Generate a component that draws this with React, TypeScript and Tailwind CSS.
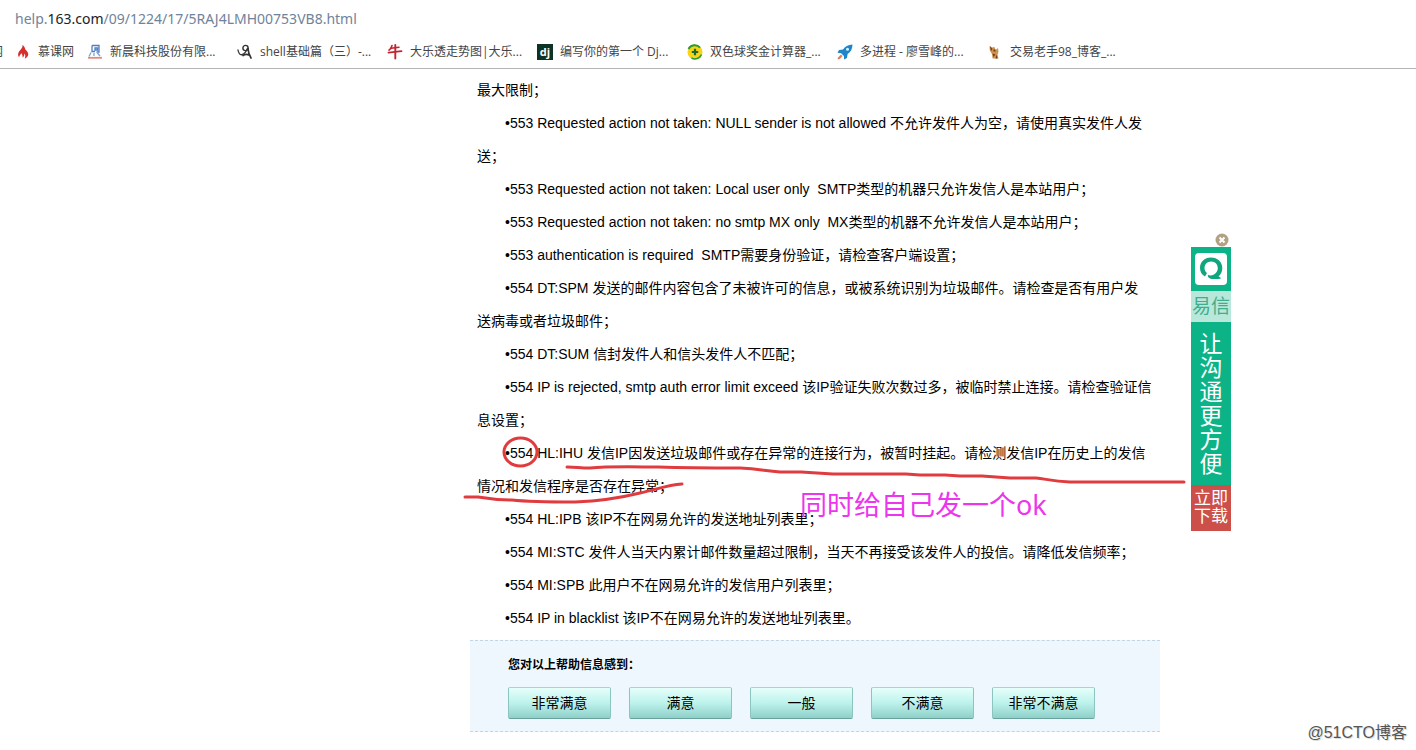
import * as React from 'react';

const bookmarks = [
  { label: '新晨科技股份有限...', icon: CompanyIcon },
  { label: 'shell基础篇（三）-...', icon: ShellIcon },
  { label: '大乐透走势图|大乐...', icon: OxIcon },
  { label: '编写你的第一个 Dj...', icon: DjangoIcon },
  { label: '双色球奖金计算器_...', icon: LotteryIcon },
  { label: '多进程 - 廖雪峰的...', icon: RocketIcon },
  { label: '交易老手98_博客_...', icon: TraderIcon },
];

const errorCodes = [
  '•553 Requested action not taken: NULL sender is not allowed 不允许发件人为空，请使用真实发件人发送；',
  '•553 Requested action not taken: Local user only\u00a0 SMTP类型的机器只允许发信人是本站用户；',
  '•553 Requested action not taken: no smtp MX only\u00a0 MX类型的机器不允许发信人是本站用户；',
  '•553 authentication is required\u00a0 SMTP需要身份验证，请检查客户端设置；',
  '•554 DT:SPM 发送的邮件内容包含了未被许可的信息，或被系统识别为垃圾邮件。请检查是否有用户发送病毒或者垃圾邮件；',
  '•554 DT:SUM 信封发件人和信头发件人不匹配；',
  '•554 IP is rejected, smtp auth error limit exceed 该IP验证失败次数过多，被临时禁止连接。请检查验证信息设置；',
  '•554 HL:IHU 发信IP因发送垃圾邮件或存在异常的连接行为，被暂时挂起。请检测发信IP在历史上的发信情况和发信程序是否存在异常；',
  '•554 HL:IPB 该IP不在网易允许的发送地址列表里；',
  '•554 MI:STC 发件人当天内累计邮件数量超过限制，当天不再接受该发件人的投信。请降低发信频率；',
  '•554 MI:SPB 此用户不在网易允许的发信用户列表里；',
  '•554 IP in blacklist 该IP不在网易允许的发送地址列表里。',
];

const ratings = ['非常满意', '满意', '一般', '不满意', '非常不满意'];

function FlameIcon() {
  return (
    <svg className="size-4 shrink-0" viewBox="0 0 16 16">
      <path d="M7.500 0.800C8 4 5.500 5.500 3.800 8c-1.200 2.200-.8 4 .4 5.200.2-2 1.300-2.800 2.600-4 .3 1.800 1 2.200.8 4.600C9 12.500 9.500 11 9.400 9.600c1 1 1.200 2.600.4 5C12.600 13.200 14 11 12.800 8.400 12 6.800 10.800 6.400 10.200 5 9.800 3.400 9 2 7.500.8z" fill="#d92c2c" />
    </svg>
  );
}

function CompanyIcon() {
  return (
    <svg className="size-4 shrink-0" viewBox="0 0 16 16" fill="none">
      <path d="M5 1.500h7v6.500H9.500M5 1.500v6h3M8 4h2.500v2H8z" stroke="#4c7fc0" strokeWidth="1.300" />
      <path d="M4 8.500 2 12.500M10 8.500l3 3.500M7 9v3" stroke="#7ba3d4" strokeWidth="1.300" />
      <path d="M1 13.800h14" stroke="#e08a7a" strokeWidth="1.800" />
    </svg>
  );
}

function ShellIcon() {
  return (
    <svg className="size-4 shrink-0" viewBox="0 0 16 16" fill="none" stroke="#333" strokeLinecap="round">
      <path d="M1 6c.6 3.500 2.200 5.200 4 4.600C7 10 9.500 7 10.400 4.600" strokeWidth="1.300" />
      <circle cx="8.500" cy="4" r="2.600" strokeWidth="1.400" />
      <path d="M11 4.500c.2 3 .8 6 3 9.500M6 11.500c2-1.600 4-1.600 6.500-.2" strokeWidth="1.700" />
    </svg>
  );
}

function OxIcon() {
  return (
    <svg className="size-4 shrink-0" viewBox="0 0 16 16" fill="none" stroke="#c4242f" strokeLinecap="round">
      <path d="M5 1.500C4.600 3.500 3.500 5 2 6.200" strokeWidth="1.600" />
      <path d="M4 4.300 12 3.200" strokeWidth="1.600" />
      <path d="M1.500 8.600 14.500 7.200" strokeWidth="1.800" />
      <path d="M8.300 1v13.500" strokeWidth="1.900" />
    </svg>
  );
}

function DjangoIcon() {
  return (
    <span className="flex size-4 shrink-0 items-center justify-center bg-[#0c3326] text-[11px] leading-4 font-bold text-white">
      dj
    </span>
  );
}

function LotteryIcon() {
  return (
    <svg className="size-4 shrink-0" viewBox="0 0 16 16" fill="none">
      <circle cx="8" cy="8" r="7.500" fill="#f7d417" />
      <path d="M1.500 5A7 7 0 0 1 13 3.600" stroke="#2a9a35" strokeWidth="1.900" />
      <path d="M14.500 10.500A7 7 0 0 1 4.500 14" stroke="#2a9a35" strokeWidth="1.500" />
      <path d="M8 4.800v6.400M4.800 8h6.400" stroke="#176b27" strokeWidth="2.200" />
    </svg>
  );
}

function RocketIcon() {
  return (
    <svg className="size-4 shrink-0" viewBox="0 0 16 16">
      <path d="M15.500.5C11 .6 8 2.500 6 5.500L2 6 .5 8.800l3.600.4 2.800 2.800.2 3.500L10 14l.6-4C13.800 8 15.400 5 15.500.5z" fill="#1e86c8" />
      <circle cx="10.500" cy="5.300" r="1.500" fill="#d9eefa" />
      <path d="M4 10.500 1 13.600 .6 15.600 2.800 15 5.600 12z" fill="#ec7a52" />
    </svg>
  );
}

function TraderIcon() {
  return (
    <svg className="size-4 shrink-0" viewBox="0 0 16 16">
      <path d="M2.500 2 5 3.500 7.500 3l1 3L11 4l.5 4-1 2.500 1 4H5.500L5 10 2.800 6.500z" fill="#cf9350" />
      <path d="M3 2 5.500 5 4 7zM6.500 5.500h2v2h-2zM5.500 9.500l3 1-2 2.500zM9.500 10.500l1 4h-2z" fill="#6e3d1c" />
    </svg>
  );
}

function Bookmark({ label, icon: Icon }: { label: string; icon: React.ComponentType }) {
  return (
    <a href="#" className="flex w-[150px] shrink-0 items-center gap-[7px]">
      <Icon />
      {label}
    </a>
  );
}

function BrowserBar() {
  return (
    <header className="h-[69px] overflow-hidden border-b border-[#b4b4b4] bg-white">
      <div className="flex h-[38px] items-center pl-[15px] font-['Noto_Sans','Noto_Sans_CJK_SC',sans-serif] text-sm text-[#71839a]">
        <span>
          help.<span className="text-[#222]">163.com</span>/09/1224/17/5RAJ4LMH00753VB8.html
        </span>
      </div>
      <nav className="flex h-[27px] items-center font-['Open_Sans','Noto_Sans_CJK_SC',sans-serif] text-xs whitespace-nowrap text-[#444]">
        <a href="#" className="flex w-[15px] shrink-0 justify-end overflow-hidden pr-3">网</a>
        <a href="#" className="flex w-[72px] shrink-0 items-center gap-[7px]">
          <FlameIcon />
          慕课网
        </a>
        {bookmarks.map(item => (
          <Bookmark key={item.label} label={item.label} icon={item.icon} />
        ))}
      </nav>
    </header>
  );
}

function Feedback() {
  return (
    <section className="border-y border-dashed border-[#c3d5e2] bg-[#eef7fe] pt-3 pr-2 pb-3 pl-[38px]">
      <h2 className="text-xs leading-6 font-bold">您对以上帮助信息感到：</h2>
      <div className="mt-[10px] flex gap-[18px]">
        {ratings.map(rating => (
          <button
            key={rating}
            type="button"
            className="h-8 w-[103px] rounded-[2px] border border-t-[#a5d5d0] border-r-[#8cc4bf] border-b-[#6aa39e] border-l-[#8cc4bf] bg-linear-to-b from-[#e6fffb] via-[#bdf2ec] to-[#8fd0c9] text-sm"
          >
            {rating}
          </button>
        ))}
      </div>
    </section>
  );
}

function Annotations() {
  return (
    <>
      <svg
        className="pointer-events-none absolute top-0 left-0 h-[662px] w-[960px]"
        viewBox="228 69 960 662"
        fill="none"
        stroke="#e03c3f"
        strokeWidth="3"
        strokeLinecap="round"
        strokeLinejoin="round"
      >
        <ellipse cx="520.500" cy="452" rx="16.500" ry="14" />
        <path d="M567 467 C576 467 580 468 590 468 C610 466 640 467 658 467 C690 468 715 468 740 468 C760 469 765 471 780 472 L801 472 L833 474 L906 474 L920 475 L945 475 L960 476 L982 476 L1010 478 L1036 478 C1046 479 1052 481 1070 482 L1184 482" />
        <path d="M465 497 L478 497 C490 499 500 500 512 500 C530 502 550 502 575 502 C600 501 620 498 640 493 C655 490 667 485 682 484" />
      </svg>
      <p className="pointer-events-none absolute top-[416px] left-[572px] text-[27px] leading-10 whitespace-nowrap text-[#ec35ec] font-['Noto_Sans','Noto_Sans_CJK_SC',sans-serif]">
        同时给自己发一个ok
      </p>
    </>
  );
}

function YixinAd() {
  return (
    <aside className="absolute top-[164px] left-full ml-[3px] w-10 text-center">
      <button type="button" aria-label="关闭" className="ml-6 block size-[14px]">
        <svg viewBox="0 0 14 14">
          <circle cx="7" cy="7" r="6.500" fill="#b3a184" />
          <path d="M4.500 4.500l5 5M9.500 4.500l-5 5" stroke="#fff" strokeWidth="2" />
        </svg>
      </button>
      <a href="#" className="block bg-[#0cb387]">
        <span className="flex h-11 items-center justify-center">
          <svg className="size-8" viewBox="0 0 32 32" fill="none">
            <rect width="32" height="32" rx="4" fill="#fff" />
            <path d="M16 4.500C9.500 4.500 5 9 5 15c0 4 2 7 5 8.500l2-3.500C10.300 18.800 9.500 17 9.500 15c0-3.700 2.900-6.500 6.700-6.500s6.600 2.800 6.600 6.500c0 4-3 7.200-7.200 7.400-1 .1-2-.2-2.600-.6-.6 2.200 1 4 4 4.200 2.500.1 5.500.1 8.500-.2.7-1-.3-2-2-2.400C26 21.400 27.300 18.500 27.300 15 27.300 9 22.500 4.500 16 4.500z" fill="#0fa57d" />
          </svg>
        </span>
        <span className="block h-[31px] bg-[#b9e8da] text-[19px] leading-[31px] text-[#3fae8d]">易信</span>
        <span className="block px-2 pt-[10px] pb-[9px] text-[23px] leading-6 text-white">让沟通更方便</span>
        <span className="block h-[46px] bg-[#cc4f49] px-[3px] pt-[5px] text-[17px] leading-[18px] text-white">
          立即
          <br />
          下载
        </span>
      </a>
    </aside>
  );
}

export default function App() {
  return (
    <div lang="zh-CN" className="relative min-h-screen overflow-hidden bg-white font-['Liberation_Sans','Noto_Sans_CJK_SC',sans-serif] text-black">
      <BrowserBar />
      <main className="relative mx-auto w-[960px] max-w-full pr-7 pl-[242px]">
        <article className="pt-[5px] pr-2 pb-[5px] pl-[7px] text-sm leading-[33px]">
          <p>最大限制；</p>
          {errorCodes.map(text => (
            <p key={text} className="indent-7">{text}</p>
          ))}
        </article>
        <Feedback />
        <Annotations />
        <YixinAd />
      </main>
      <p className="absolute right-[9px] bottom-[5px] text-base leading-6 text-[#555] text-shadow-[1px_1px_0_#ddd]">@51CTO博客</p>
    </div>
  );
}
